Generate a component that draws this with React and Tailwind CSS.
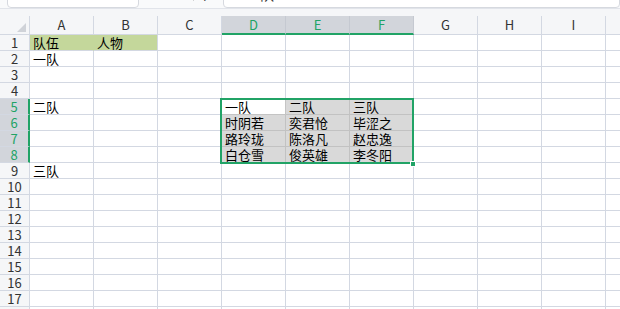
import React from 'react';

const cols = ['A', 'B', 'C', 'D', 'E', 'F', 'G', 'H', 'I', 'J'];
const selCols = ['D', 'E', 'F'];
const selRows = [5, 6, 7, 8];

const data = {
  A1: '队伍',
  B1: '人物',
  A2: '一队',
  A5: '二队',
  A9: '三队',
  D5: '一队',
  E5: '二队',
  F5: '三队',
  D6: '时阴若',
  E6: '奕君怆',
  F6: '毕涩之',
  D7: '路玲珑',
  E7: '陈洛凡',
  F7: '赵忠逸',
  D8: '白仓雪',
  E8: '俊英雄',
  F8: '李冬阳',
};

const font = { fontFamily: '"Noto Sans CJK SC", "Noto Sans", sans-serif' };

const Toolbar = () => (
  <div className="h-[9px] overflow-hidden bg-[#f9fafb] border-b border-[#e1e4ea]">
    <div className="-mt-[20px] flex items-center h-[28px]">
      <div className="ml-[7px] w-[132px] h-[28px] bg-white border border-[#d6d9df] rounded-[4px] flex items-center justify-center text-[14px] leading-[16px] text-[#333]">
        D5
      </div>
      <svg className="ml-[42px]" width="14" height="14" viewBox="0 0 14 14" fill="none" stroke="#555" strokeWidth="1.3">
        <circle cx="6" cy="6" r="4.5" />
        <path d="M9.3 9.3 L13 13" />
      </svg>
      <span className="ml-[9px] italic text-[14px] leading-[16px] text-[#444]" style={{ fontFamily: '"Liberation Serif", serif' }}>fx</span>
      <div className="ml-[9px] flex-1 h-[28px] bg-white border border-[#d6d9df] rounded-[4px] flex items-center pl-[22px] text-[14px] leading-[16px] text-[#333]">
        一队
      </div>
    </div>
  </div>
);

const Header = () => (
  <div className="flex h-[26px] bg-[#f5f6f8] pt-[7px]">
    <div className="w-[30px] shrink-0 border-r border-b border-[#d3d8e2] relative">
      <div className="absolute right-[3px] bottom-[2px] w-0 h-0 border-l-[9px] border-l-transparent border-b-[9px] border-b-[#cfd2d8]" />
    </div>
    {cols.map((c) => {
      const sel = selCols.includes(c);
      return (
        <div
          key={c}
          className={`w-[64px] shrink-0 flex items-center justify-center text-[13px] leading-[16px] border-r ${
            sel
              ? 'bg-[#d2d5db] text-[#21a366] border-b-2 border-b-[#21a366] border-r-[#c5c9d1]'
              : 'text-[#333] border-b border-[#d3d8e2]'
          }`}
        >
          {c}
        </div>
      );
    })}
  </div>
);

const Row = ({ n }) => {
  const rowSel = selRows.includes(n);
  return (
    <div className="flex h-[16px]">
      <div
        className={`w-[30px] shrink-0 flex items-center justify-center text-[13px] leading-[15px] border-b border-[#d3d8e2] ${
          rowSel ? 'bg-[#d2d5db] text-[#21a366] border-r-2 border-r-[#21a366]' : 'bg-[#f5f6f8] text-[#333] border-r'
        }`}
      >
        {n}
      </div>
      {cols.map((c) => {
        const id = c + n;
        const inRange = selCols.includes(c) && rowSel;
        const head = n === 1 && (c === 'A' || c === 'B');
        let cls = 'bg-white border-r border-b border-[#d3d8e2]';
        if (head) cls = 'bg-[#c4d79b] border-b border-[#d3d8e2] border-r ' + (c === 'A' ? 'border-r-[#c4d79b]' : '');
        if (inRange) cls = id === 'D5' ? 'bg-white border-r border-b border-[#c4c4c4]' : 'bg-[#d9d9d9] border-r border-b border-[#c2c2c2]';
        return (
          <div key={c} className={`w-[64px] shrink-0 overflow-hidden whitespace-nowrap pl-[3px] text-[13px] leading-[15px] text-black ${cls}`}>
            {data[id] || ''}
          </div>
        );
      })}
    </div>
  );
};

export default function App() {
  const rows = Array.from({ length: 18 }, (_, i) => i + 1);
  return (
    <div className="w-[620px] h-[309px] overflow-hidden bg-white relative" style={font}>
      <Toolbar />
      <Header />
      <div className="relative">
        {rows.map((n) => (
          <Row key={n} n={n} />
        ))}
        {/* selection outline */}
        <div className="absolute left-[220px] top-[63px] w-[194px] h-[66px] border-2 border-[#21a366] pointer-events-none" />
        <div className="absolute left-[410px] top-[126px] w-[6px] h-[6px] bg-[#21a366] border border-white" />
      </div>
    </div>
  );
}
